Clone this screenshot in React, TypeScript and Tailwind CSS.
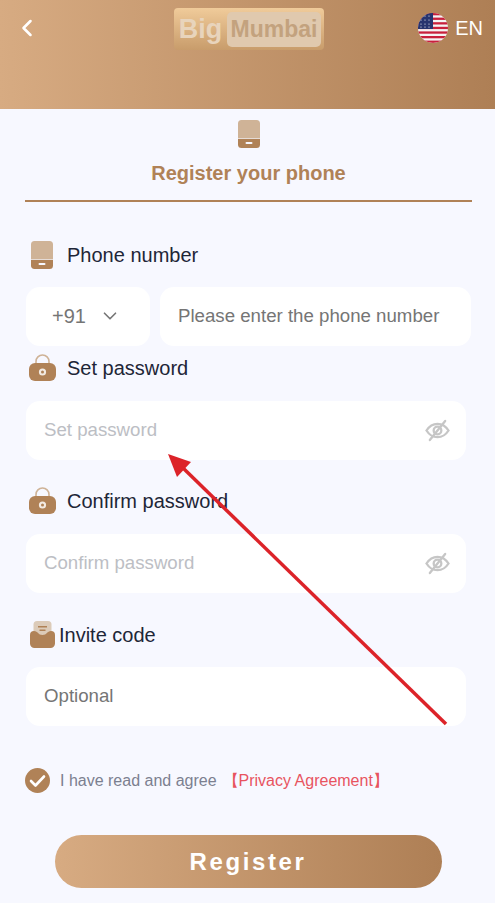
import { ChevronLeft, ChevronDown } from 'lucide-react';

const font = 'font-["Liberation_Sans",Arial,sans-serif]';

function PhoneIcon({ className }: { className: string }) {
  return (
    <svg viewBox="0 0 22 28" className={className}>
      <path d="M3.5 0h15A3.5 3.5 0 0 1 22 3.5V18H0V3.5A3.5 3.5 0 0 1 3.5 0z" fill="#cfb397" />
      <path d="M0 18.8h22v5.7a3.5 3.5 0 0 1-3.5 3.5h-15A3.5 3.5 0 0 1 0 24.5z" fill="#b08257" />
      <rect x="7.5" y="22" width="7" height="2" rx="1" fill="#f7f8ff" />
    </svg>
  );
}

function LockIcon() {
  return (
    <svg viewBox="0 0 27 27" className="w-[27px] h-[27px] shrink-0">
      <path d="M7 11V7.5a6.5 6.5 0 0 1 13 0V11" fill="none" stroke="#cfb397" strokeWidth="1.6" />
      <rect x="0" y="9" width="27" height="18" rx="6" fill="#b08257" />
      <circle cx="13.5" cy="18" r="3.6" fill="#f3ebe3" />
      <circle cx="13.5" cy="18" r="1.5" fill="#b08257" />
    </svg>
  );
}

function InviteIcon() {
  return (
    <svg viewBox="0 0 25 27" className="w-[25px] h-[27px] shrink-0">
      <rect x="3.5" y="0" width="18" height="20" rx="3.5" fill="#dccbb9" />
      <rect x="8" y="5" width="9" height="1.5" fill="#b08257" />
      <rect x="9.5" y="8.5" width="6" height="1.5" fill="#b08257" />
      <path d="M0 14a4 4 0 0 1 4-4c4 0 4 4 8.500 4S17 10 21 10a4 4 0 0 1 4 4v8.500a4.500 4.500 0 0 1-4.500 4.500h-16A4.500 4.500 0 0 1 0 22.500z" fill="#b08257" />
    </svg>
  );
}

function EyeOff() {
  return (
    <svg viewBox="0 0 26 24" className="w-[25px] h-[23px] shrink-0" fill="none" stroke="#c6c6c6" strokeWidth="2.400" strokeLinecap="round">
      <path d="M1.500 12C5 6.500 9 5 13 5s8 1.500 11.500 7C21 17.500 17 19 13 19S5 17.500 1.500 12z" />
      <circle cx="13" cy="12" r="4" />
      <path d="M21 2 5 22" />
    </svg>
  );
}

function UsFlag() {
  const stripes = [0, 1, 2, 3, 4, 5, 6];
  return (
    <svg viewBox="0 0 30 30" className="w-[30px] h-[30px] shrink-0">
      <defs>
        <clipPath id="flag"><circle cx="15" cy="15" r="15" /></clipPath>
      </defs>
      <g clipPath="url(#flag)">
        <rect width="30" height="30" fill="#f4f4f4" />
        {stripes.map((s) => <rect key={s} y={s * 4.6} width="30" height="2.300" fill="#c8203c" />)}
        <rect width="15" height="16" fill="#27346f" />
        {[3, 7, 11].map((x) => [3, 7, 11, 14].map((y) => <circle key={`${x}-${y}`} cx={x} cy={y} r="0.600" fill="#fff" />))}
      </g>
    </svg>
  );
}

function Field({ placeholder, eye, textColor }: { placeholder: string; eye?: boolean; textColor: string }) {
  return (
    <div className="h-[59px] w-[440px] bg-white rounded-[14px] flex items-center justify-between pl-[18px] pr-[16px]">
      <span className={`text-[18.67px] pb-[2px] ${textColor}`}>{placeholder}</span>
      {eye && <EyeOff />}
    </div>
  );
}

export default function App() {
  return (
    <div className={`relative w-[495px] h-[903px] overflow-hidden bg-[#f7f8ff] ${font}`}>
      <header className="h-[109px] bg-gradient-to-r from-[#d7ab82] to-[#ae7f55] relative">
        <div className="h-[56px] flex items-center justify-between pl-[13px] pr-[12px]">
          <ChevronLeft className="w-[28px] h-[28px] text-white" strokeWidth={2.2} />
          <div className="flex items-center gap-[7px]">
            <UsFlag />
            <span className="text-[20px] text-white">EN</span>
          </div>
        </div>
        {/* logo sits over the header row */}
        <div className="absolute left-[174px] top-[8px] w-[150px] h-[42px] rounded-[4px] bg-gradient-to-b from-[#f0cb9a] to-[#c89c6b] flex items-center">
          <span className="w-[53px] text-center text-[27px] font-bold text-[#e8d4bc]">Big</span>
          <span className="w-[94px] h-[35px] rounded-[5px] bg-[#e0c9ae] flex items-center justify-center text-[23px] font-bold text-[#c3a27e]">Mumbai</span>
        </div>
      </header>

      <div className="flex flex-col items-center pt-[11px] pl-[2px]">
        <PhoneIcon className="w-[22px] h-[28px]" />
        <h1 className="mt-[12px] text-[20px] leading-[26px] font-bold text-[#b08257]">Register your phone</h1>
        <div className="mt-[14px] w-[447px] h-[2px] bg-[#b08257]" />
      </div>

      <div className="pl-[26px] pt-[39px]">
        <div className="flex items-center gap-[14px] h-[28px] pl-[5px] text-[20px] text-[#1e2637]">
          <PhoneIcon className="w-[22px] h-[28px] shrink-0" />
          Phone number
        </div>
        <div className="flex gap-[10px] mt-[18px]">
          <div className="w-[124px] h-[59px] bg-white rounded-[14px] flex items-center pl-[26px] pb-[2px] gap-[13px] text-[20px] text-[#757575]">
            +91
            <ChevronDown className="w-[22px] h-[22px] text-[#757575]" strokeWidth={1.8} />
          </div>
          <div className="w-[311px] h-[59px] bg-white rounded-[14px] flex items-center pl-[18px] pb-[2px] text-[18.67px] text-[#757575]">
            Please enter the phone number
          </div>
        </div>

        <div className="flex items-center gap-[11px] h-[27px] ml-[3px] mt-[8px] text-[20px] text-[#1e2637]">
          <LockIcon />
          Set password
        </div>
        <div className="mt-[20px]"><Field placeholder="Set password" eye textColor="text-[#bcbec4]" /></div>

        <div className="flex items-center gap-[11px] h-[27px] ml-[3px] mt-[27px] text-[20px] text-[#1e2637]">
          <LockIcon />
          Confirm password
        </div>
        <div className="mt-[20px]"><Field placeholder="Confirm password" eye textColor="text-[#bcbec4]" /></div>

        <div className="flex items-center gap-[4px] h-[27px] ml-[4px] mt-[28px] text-[20px] text-[#1e2637]">
          <InviteIcon />
          Invite code
        </div>
        <div className="mt-[19px]"><Field placeholder="Optional" textColor="text-[#757575]" /></div>

        <div className="flex items-center h-[25px] -ml-px mt-[42px]">
          <svg viewBox="0 0 25 25" className="w-[25px] h-[25px] shrink-0">
            <circle cx="12.500" cy="12.500" r="12.500" fill="#b08257" />
            <path d="M6 13l4.500 4.500L19 8.500" fill="none" stroke="#fff" strokeWidth="2.600" strokeLinecap="round" strokeLinejoin="round" />
          </svg>
          <span className="ml-[10px] text-[16px] text-[#7c8090]">I have read and agree</span>
          <span className="ml-[6px] text-[16px] text-[#e8545f]">【Privacy Agreement】</span>
        </div>
      </div>

      <div className="flex justify-center mt-[42px] pl-[1px]">
        <div className="w-[387px] h-[53px] rounded-full bg-gradient-to-r from-[#d7ab82] to-[#ae7f55] flex items-center justify-center text-[24px] font-bold tracking-[2.6px] text-white">
          Register
        </div>
      </div>

      {/* annotation arrow drawn over the form */}
      <svg viewBox="0 0 495 903" className="absolute left-0 top-0 w-[495px] h-[903px] pointer-events-none">
        <path d="M446 724 182 467" stroke="#dc2329" strokeWidth="3.500" fill="none" />
        <path d="M168 454 191 462 177 477z" fill="#dc2329" />
      </svg>
    </div>
  );
}
